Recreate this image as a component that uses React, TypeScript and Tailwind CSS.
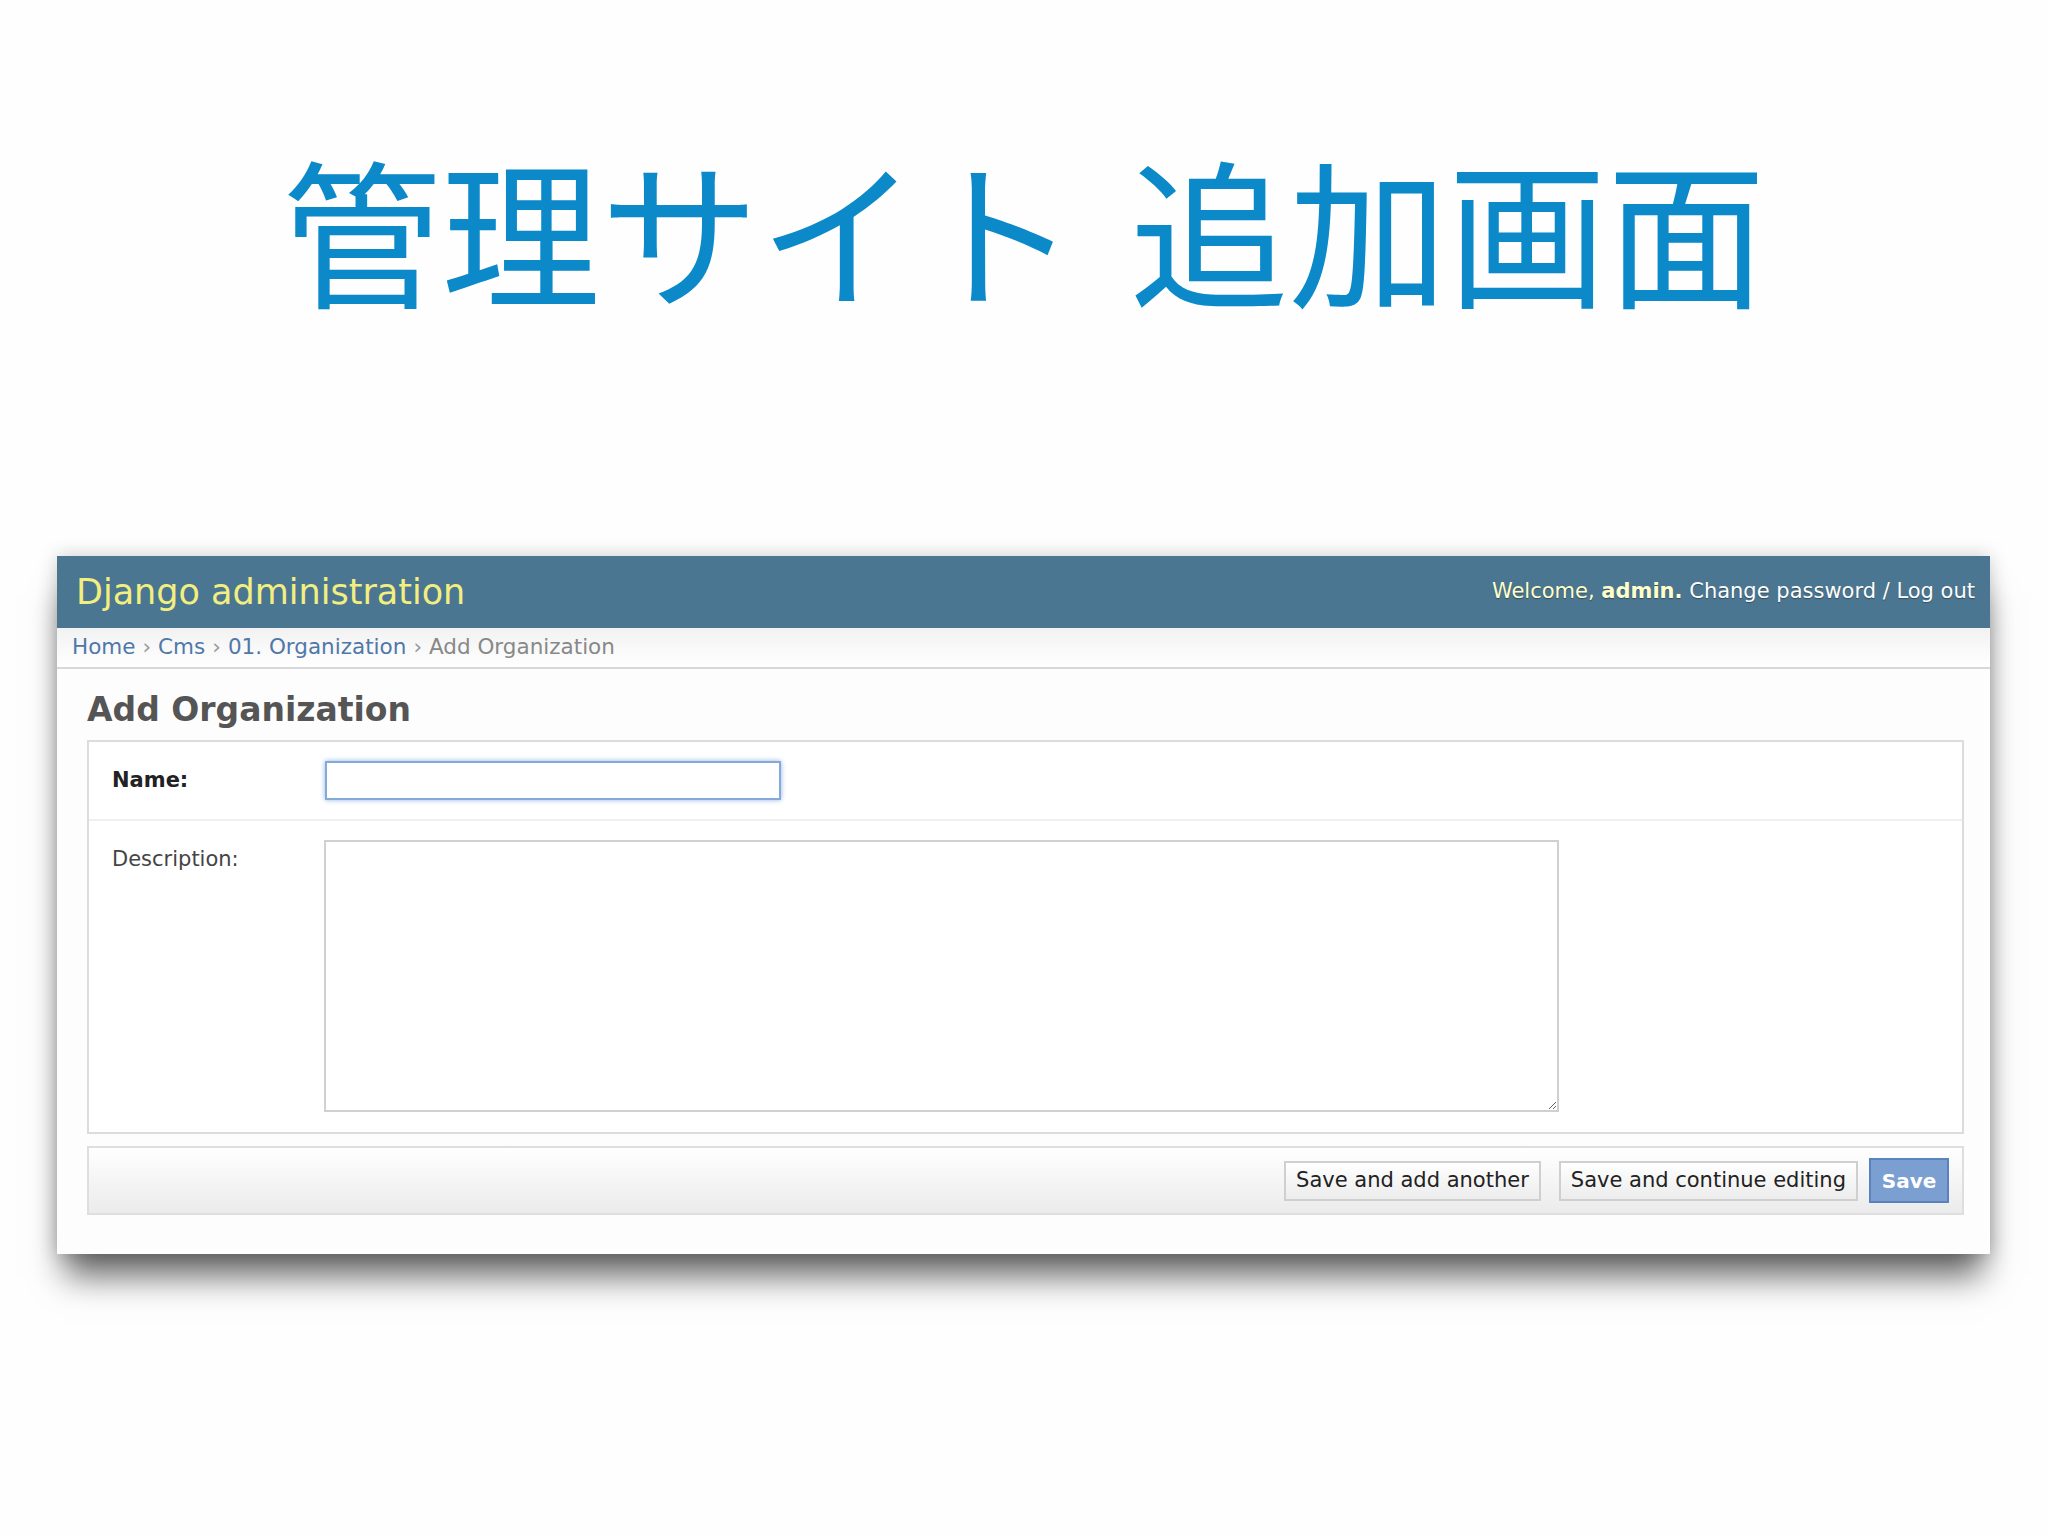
export default function App() {
  return (
    <main className="w-[2048px] h-[1536px] overflow-hidden bg-[#fefefe] font-['DejaVu_Sans',sans-serif]">
      <h1 className="pt-[148px] h-[308px] text-center text-[159px] leading-none text-[#0b89c8] [word-spacing:17px] font-['Noto_Sans_CJK_JP',sans-serif]">
        管理サイト 追加画面
      </h1>

      <div className="ml-[57px] mt-[248px] w-[1933px] h-[698px] bg-[#fdfdfd] shadow-[0_30px_32px_-8px_rgba(0,0,0,0.6),0_0_18px_rgba(0,0,0,0.2)]">
        <div className="h-[72px] bg-[#4b7691] flex items-center justify-between pl-[19px] pr-[15px]">
          <div className="text-[35px] text-[#f2ee80]">Django administration</div>
          <div className="text-[21px] text-[#ffffcc] [text-shadow:0_1px_1px_rgba(0,0,0,0.35)]">
            Welcome, <span className="font-bold">admin.</span>{" "}
            <span className="text-white">Change password / Log out</span>
          </div>
        </div>

        <div className="h-[41px] flex items-center pl-[15px] text-[21.5px] text-[#999] bg-gradient-to-b from-[#f2f2f2] to-white border-b-2 border-[#d8d8d8]">
          <span className="text-[#4f78a9]">Home</span>
          <span className="mx-[7px]">›</span>
          <span className="text-[#4f78a9]">Cms</span>
          <span className="mx-[7px]">›</span>
          <span className="text-[#4f78a9]">01. Organization</span>
          <span className="mx-[7px]">›</span>
          <span className="text-[#888]">Add Organization</span>
        </div>

        <div className="pt-[21px] pl-[30px] pr-[26px]">
          <h2 className="text-[33px] leading-[40px] font-bold text-[#555]">Add Organization</h2>

          <div className="mt-[10px] border-2 border-[#dcdcdc] bg-white">
            <div className="flex items-center pl-[23px] py-[19px] border-b-2 border-[#efefef]">
              <label className="w-[213px] text-[21px] font-bold text-[#222]">Name:</label>
              <input
                className="w-[456px] h-[39px] border-2 border-[#85a9d9] shadow-[0_0_5px_#8fb3e3] bg-white outline-none"
                autoFocus
              />
            </div>
            <div className="flex items-start pl-[23px] pt-[19px] pb-[20px]">
              <label className="w-[212px] pt-[6px] text-[21px] leading-[26px] text-[#444]">Description:</label>
              <textarea className="w-[1235px] h-[272px] border-2 border-[#d0d0d0] bg-white outline-none" />
            </div>
          </div>

          <div className="mt-[12px] h-[69px] border-2 border-[#dedede] bg-gradient-to-b from-white to-[#ebebeb] flex items-center justify-end pr-[13px]">
            <button className="h-[40px] px-[10px] border-2 border-[#cfcfcf] bg-gradient-to-b from-white to-[#ececec] text-[21px] text-[#222]">
              Save and add another
            </button>
            <button className="ml-[18px] h-[40px] px-[10px] border-2 border-[#cfcfcf] bg-gradient-to-b from-white to-[#ececec] text-[21px] text-[#222]">
              Save and continue editing
            </button>
            <button className="ml-[11px] h-[45px] w-[80px] border-2 border-[#5a82bd] bg-[#7b9fd0] text-[20px] font-bold text-white">
              Save
            </button>
          </div>
        </div>
      </div>
    </main>
  );
}
